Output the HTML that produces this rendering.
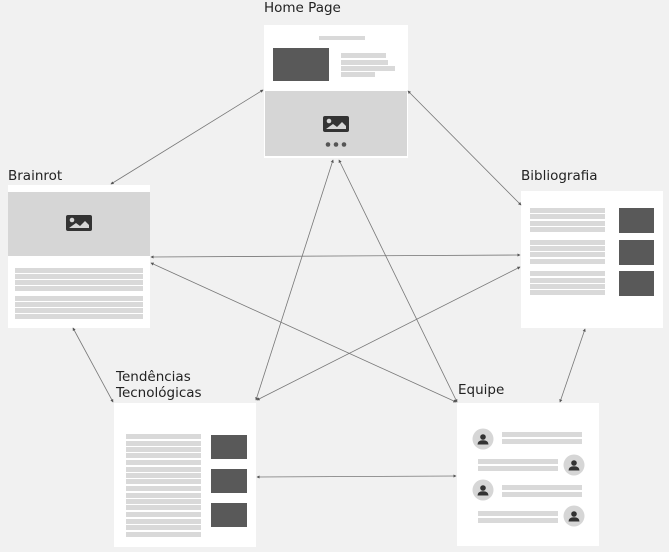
<!DOCTYPE html>
<html><head><meta charset="utf-8"><style>
body{margin:0;width:669px;height:552px;background:#f1f1f1;position:relative;overflow:hidden;font-family:"DejaVu Sans","Liberation Sans",sans-serif}
.a{position:absolute}
.w{position:absolute;background:#fff}
.l{position:absolute;background:#d9d9d9}
.d{position:absolute;background:#595959}
.t{position:absolute;font-size:13.5px;color:#222;line-height:16px}
</style></head><body>
<div class="t" style="left:264px;top:0">Home Page</div>
<div class="t" style="left:8px;top:168px">Brainrot</div>
<div class="t" style="left:521px;top:168px">Bibliografia</div>
<div class="t" style="left:116px;top:369px">Tendências<br>Tecnológicas</div>
<div class="t" style="left:458px;top:382px">Equipe</div>

<!-- Home -->
<div class="w" style="left:264px;top:25px;width:144px;height:133px"></div>
<div class="l" style="left:319px;top:36px;width:46px;height:4px"></div>
<div class="d" style="left:273px;top:48px;width:56px;height:33px"></div>
<div class="l" style="left:341px;top:53px;width:45px;height:5px"></div>
<div class="l" style="left:341px;top:60px;width:47px;height:5px"></div>
<div class="l" style="left:341px;top:66px;width:54px;height:5px"></div>
<div class="l" style="left:341px;top:72px;width:34px;height:5px"></div>
<div class="a" style="left:265px;top:91px;width:142px;height:65px;background:#d6d6d6"></div>

<!-- Brainrot -->
<div class="w" style="left:8px;top:185px;width:142px;height:143px"></div>
<div class="a" style="left:8px;top:192px;width:142px;height:64px;background:#d6d6d6"></div>
<div class="l" style="left:15px;top:268px;width:128px;height:5px"></div>
<div class="l" style="left:15px;top:274px;width:128px;height:5px"></div>
<div class="l" style="left:15px;top:280px;width:128px;height:5px"></div>
<div class="l" style="left:15px;top:286px;width:128px;height:5px"></div>
<div class="l" style="left:15px;top:296px;width:128px;height:5px"></div>
<div class="l" style="left:15px;top:302px;width:128px;height:5px"></div>
<div class="l" style="left:15px;top:308px;width:128px;height:5px"></div>
<div class="l" style="left:15px;top:314px;width:128px;height:5px"></div>

<!-- Bibliografia -->
<div class="w" style="left:521px;top:191px;width:142px;height:137px"></div>
<div class="l" style="left:530px;top:208px;width:75px;height:5px"></div>
<div class="l" style="left:530px;top:214px;width:75px;height:5px"></div>
<div class="l" style="left:530px;top:221px;width:75px;height:5px"></div>
<div class="l" style="left:530px;top:227px;width:75px;height:5px"></div>
<div class="l" style="left:530px;top:240px;width:75px;height:5px"></div>
<div class="l" style="left:530px;top:246px;width:75px;height:5px"></div>
<div class="l" style="left:530px;top:252px;width:75px;height:5px"></div>
<div class="l" style="left:530px;top:259px;width:75px;height:5px"></div>
<div class="l" style="left:530px;top:271px;width:75px;height:5px"></div>
<div class="l" style="left:530px;top:278px;width:75px;height:5px"></div>
<div class="l" style="left:530px;top:284px;width:75px;height:5px"></div>
<div class="l" style="left:530px;top:290px;width:75px;height:5px"></div>
<div class="d" style="left:619px;top:208px;width:35px;height:25px"></div>
<div class="d" style="left:619px;top:240px;width:35px;height:25px"></div>
<div class="d" style="left:619px;top:271px;width:35px;height:25px"></div>

<!-- Tendencias -->
<div class="w" style="left:114px;top:403px;width:142px;height:144px"></div>
<div class="d" style="left:211px;top:435px;width:36px;height:24px"></div>
<div class="d" style="left:211px;top:469px;width:36px;height:24px"></div>
<div class="d" style="left:211px;top:503px;width:36px;height:24px"></div>

<!-- Equipe -->
<div class="w" style="left:457px;top:403px;width:142px;height:143px"></div>
<div class="l" style="left:502px;top:432px;width:80px;height:5px"></div>
<div class="l" style="left:502px;top:439px;width:80px;height:5px"></div>
<div class="l" style="left:478px;top:459px;width:80px;height:5px"></div>
<div class="l" style="left:478px;top:466px;width:80px;height:5px"></div>
<div class="l" style="left:502px;top:485px;width:80px;height:5px"></div>
<div class="l" style="left:502px;top:492px;width:80px;height:5px"></div>
<div class="l" style="left:478px;top:511px;width:80px;height:5px"></div>
<div class="l" style="left:478px;top:518px;width:80px;height:5px"></div>

<svg class="a" style="left:0;top:0" width="669" height="552">
<defs><marker id="m" viewBox="0 0 6 6" refX="5" refY="3" markerWidth="4" markerHeight="4" orient="auto-start-reverse"><path d="M0,0L6,3L0,6z" fill="#555"/></marker>
<g id="av"><circle r="10.5" fill="#d6d6d6"/><circle cy="-2" r="2.8" fill="#333"/><path d="M-5.5,5.5Q-5.5,1.2 0,1.2Q5.5,1.2 5.5,5.5z" fill="#333"/></g>
<g id="img"><rect x="0" y="0" width="26" height="16" rx="2" fill="#333"/><circle cx="6" cy="5" r="2.3" fill="#d6d6d6"/><path d="M3,13L10,8L14,11L19,6L23,10L23,13z" fill="#d6d6d6"/></g>
</defs>
<g stroke="#777" stroke-width="0.8" fill="none" marker-start="url(#m)" marker-end="url(#m)">
<line x1="263" y1="90" x2="111" y2="184"/>
<line x1="408" y1="91" x2="521" y2="205"/>
<line x1="333" y1="160" x2="256" y2="400"/>
<line x1="339" y1="160" x2="457" y2="402"/>
<line x1="151" y1="257" x2="520" y2="255"/>
<line x1="151" y1="263" x2="456" y2="402"/>
<line x1="520" y1="267" x2="257" y2="400"/>
<line x1="73" y1="328" x2="113" y2="402"/>
<line x1="585" y1="329" x2="560" y2="402"/>
<line x1="257" y1="477" x2="456" y2="476"/>
</g>
<use href="#img" x="323" y="116"/>
<use href="#img" x="66" y="215"/>
<g fill="#555"><circle cx="328" cy="144.5" r="2.3"/><circle cx="336" cy="144.5" r="2.3"/><circle cx="344" cy="144.5" r="2.3"/></g>
<use href="#av" x="483" y="439"/>
<use href="#av" x="574" y="465"/>
<use href="#av" x="483" y="490"/>
<use href="#av" x="574" y="516"/>
<g fill="#d9d9d9">
<rect x="126" y="434" width="75" height="5"/><rect x="126" y="441" width="75" height="5"/><rect x="126" y="447" width="75" height="5"/><rect x="126" y="453" width="75" height="5"/>
<rect x="126" y="460" width="75" height="5"/><rect x="126" y="467" width="75" height="5"/><rect x="126" y="473" width="75" height="5"/><rect x="126" y="479" width="75" height="5"/>
<rect x="126" y="486" width="75" height="5"/><rect x="126" y="493" width="75" height="5"/><rect x="126" y="499" width="75" height="5"/><rect x="126" y="505" width="75" height="5"/>
<rect x="126" y="512" width="75" height="5"/><rect x="126" y="519" width="75" height="5"/><rect x="126" y="525" width="75" height="5"/><rect x="126" y="532" width="75" height="5"/>
</g>
</svg>
</body></html>
